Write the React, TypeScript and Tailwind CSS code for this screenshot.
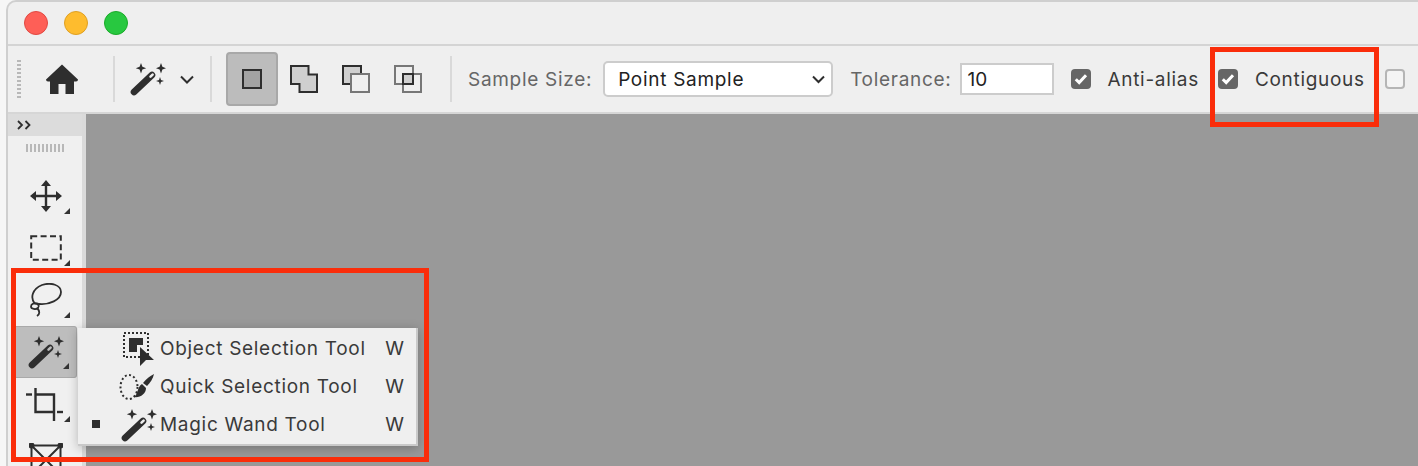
import { ReactNode } from "react";

const ink = "#2e2e2e";

function Sep({ className }: { className: string }) {
  return <div className={`h-[46px] w-[2px] shrink-0 bg-[#d9d9d9] ${className}`} />;
}

function Wand({ tip = "#efefef" }: { tip?: string }) {
  return (
    <svg width="36" height="33" viewBox="0 0 36 33" fill={ink}>
      <path d="M4 29 L22 12" stroke={ink} strokeWidth="6.6" strokeLinecap="round" />
      <path d="M20.5 13.6 L22.6 11.6" stroke={tip} strokeWidth="2.6" strokeLinecap="round" />
      <path d="M11 0 L12.4 3.8 L16.2 5.2 L12.4 6.6 L11 10.4 L9.6 6.6 L5.8 5.2 L9.6 3.8Z" />
      <path d="M31 0 L32.4 3.8 L36 5.2 L32.4 6.6 L31 10.4 L29.6 6.6 L26 5.2 L29.6 3.8Z" />
      <path d="M30 14 L31 17 L34 18 L31 19 L30 22 L29 19 L26 18 L29 17Z" />
    </svg>
  );
}

function ModeIcon({ n }: { n: number }) {
  if (n === 0)
    return (
      <svg width="28" height="28" viewBox="0 0 28 28">
        <path d="M1 1 H18.5 V9.5 H27 V27 H9.5 V19 H1Z" fill="#cfcfcf" stroke={ink} strokeWidth="2" />
      </svg>
    );
  if (n === 1)
    return (
      <svg width="28" height="28" viewBox="0 0 28 28">
        <rect x="1" y="1" width="18" height="18" fill="#cfcfcf" stroke={ink} strokeWidth="2" />
        <rect x="9" y="9" width="18" height="18" fill="#efefef" stroke="#777" strokeWidth="2" />
      </svg>
    );
  return (
    <svg width="28" height="28" viewBox="0 0 28 28" fill="none">
      <rect x="1" y="1" width="18" height="18" stroke="#777" strokeWidth="2" />
      <rect x="9" y="9" width="18" height="18" stroke="#777" strokeWidth="2" />
      <rect x="9" y="9" width="10" height="10" fill="#cfcfcf" stroke={ink} strokeWidth="2" />
    </svg>
  );
}

function Check({ on, className }: { on: boolean; className: string }) {
  if (!on)
    return <div className={`h-5 w-5 shrink-0 rounded-[4px] border-2 border-[#b5b5b5] bg-[#f4f4f4] ${className}`} />;
  return (
    <div className={`flex h-5 w-5 shrink-0 items-center justify-center rounded-[4px] bg-[#666666] ${className}`}>
      <svg width="14" height="12" viewBox="0 0 14 12" fill="none">
        <path d="M1.8 6.2 L5.2 9.6 L12 2.2" stroke="#fff" strokeWidth="3" />
      </svg>
    </div>
  );
}

function Corner() {
  return <div className="absolute right-[7px] bottom-[8px] h-0 w-0 border-b-[6px] border-l-[6px] border-b-[#333333] border-l-transparent" />;
}

function Tool({ children, active }: { children: ReactNode; active?: boolean }) {
  return (
    <div
      className={`relative flex h-[52px] w-[61px] items-center justify-center pr-[1px] ${
        active ? "rounded-r-[3px] border-y border-r border-[#a9a9a9] bg-[#bdbdbd]" : ""
      }`}
    >
      {children}
      <Corner />
    </div>
  );
}

function MenuRow({ icon, label, mark }: { icon: ReactNode; label: string; mark?: boolean }) {
  return (
    <div className="flex h-[38px] items-center">
      <div className="flex w-[40px] shrink-0 justify-center">
        {mark && <div className="mr-[4px] mb-[3px] h-2 w-2 bg-[#2e2e2e]" />}
      </div>
      <div className="flex w-[42px] shrink-0 justify-center">{icon}</div>
      <span className="tracking-[0.7px]">{label}</span>
      <span className="mr-[12px] ml-auto">W</span>
    </div>
  );
}

export default function App() {
  return (
    <div className="relative h-[466px] w-[1418px] overflow-hidden bg-[#f6f6f6] pl-[6px] font-['Inter',sans-serif] text-[19px] text-[#333333]">
      <div className="flex h-full flex-col rounded-tl-[10px] border-t-2 border-l-2 border-[#cfcfcf] bg-[#efefef]">
        {/* title bar */}
        <div className="flex h-[44px] shrink-0 items-center gap-[16px] border-b-2 border-[#d4d4d4] pl-[16px]">
          <div className="h-6 w-6 rounded-full border border-[#e14942] bg-[#fe5f57]" />
          <div className="h-6 w-6 rounded-full border border-[#dfa023] bg-[#febc2e]" />
          <div className="h-6 w-6 rounded-full border border-[#1aab29] bg-[#28c840]" />
        </div>

        {/* options bar */}
        <div className="flex h-[68px] shrink-0 items-center border-b-2 border-[#d6d6d6] text-[#3a3a3a]">
          <div className="ml-[9px] h-[38px] w-[4px] shrink-0 bg-[repeating-linear-gradient(to_bottom,#b8b8b8_0,#b8b8b8_2px,transparent_2px,transparent_4px)]" />
          <svg className="ml-[25px] shrink-0" width="32" height="30" viewBox="0 0 32 30" fill={ink}>
            <path d="M16 0.5 L32 15.5 Q32 17.5 30 17.5 H28 V30 H19.5 V20 H12.5 V30 H4 V17.5 H2 Q0 17.5 0 15.5Z" />
          </svg>
          <Sep className="ml-[35px]" />
          <div className="ml-[15px] shrink-0"><Wand /></div>
          <svg className="ml-[14px] shrink-0" width="14" height="9" viewBox="0 0 14 9" fill="none">
            <path d="M1 1.5 L7 7.5 L13 1.5" stroke={ink} strokeWidth="2" />
          </svg>
          <Sep className="ml-[16px]" />
          <div className="ml-[14px] flex h-[54px] w-[52px] shrink-0 items-center justify-center rounded-[4px] border-2 border-[#a8a8a8] bg-[#bcbcbc]">
            <div className="h-5 w-5 border-2 border-[#2e2e2e] bg-[#a3a3a3]" />
          </div>
          <div className="ml-[12px] flex shrink-0 gap-[24px]">
            <ModeIcon n={0} />
            <ModeIcon n={1} />
            <ModeIcon n={2} />
          </div>
          <Sep className="ml-[28px]" />
          <span className="ml-[16px] shrink-0 pt-[2px] tracking-[0.7px] text-[#666666]">Sample Size:</span>
          <div className="ml-[11px] flex h-[36px] w-[230px] shrink-0 items-center justify-between rounded-[5px] border-2 border-[#cccccc] bg-white pr-[6px] pl-[13px] text-[#222222]">
            <span className="pt-[2px] tracking-[0.7px]">Point Sample</span>
            <svg width="13" height="9" viewBox="0 0 13 9" fill="none">
              <path d="M1 1.5 L6.5 7 L12 1.5" stroke={ink} strokeWidth="2" />
            </svg>
          </div>
          <span className="ml-[17px] shrink-0 pt-[2px] tracking-[0.7px] text-[#666666]">Tolerance:</span>
          <div className="ml-[9px] flex h-[32px] w-[94px] shrink-0 items-center border-2 border-[#cccccc] bg-white pt-[2px] pl-[5px] text-[#222222]">10</div>
          <Check on className="ml-[17px]" />
          <span className="ml-[16px] shrink-0 pt-[2px] tracking-[0.7px]">Anti-alias</span>
          <Check on className="ml-[19px]" />
          <span className="ml-[17px] shrink-0 pt-[2px] tracking-[0.7px]">Contiguous</span>
          <Check on={false} className="ml-[20px]" />
        </div>

        {/* work area */}
        <div className="flex min-h-0 flex-1">
          <div className="w-[74px] shrink-0 bg-[#f0f0f0]">
            <div className="flex h-[22px] items-center bg-[#dcdcdc] pl-[9px]">
              <svg width="14" height="10" viewBox="0 0 14 10" fill="none">
                <path d="M1 1 L5 5 L1 9 M8.5 1 L12.5 5 L8.5 9" stroke={ink} strokeWidth="1.8" />
              </svg>
            </div>
            <div className="mt-[8px] ml-[18px] h-2 w-[38px] bg-[repeating-linear-gradient(to_right,#b8b8b8_0,#b8b8b8_2px,transparent_2px,transparent_4px)]" />
            <div className="mt-[18px] flex flex-col pl-[8px]">
              <Tool>
                <svg width="32" height="32" viewBox="0 0 32 32" fill={ink}>
                  <path d="M16 0 L21 6 H11Z M16 32 L11 26 H21Z M0 16 L6 11 V21Z M32 16 L26 21 V11Z" />
                  <path d="M16 4 V28 M4 16 H28" stroke={ink} strokeWidth="2.4" />
                </svg>
              </Tool>
              <Tool>
                <svg width="32" height="26" viewBox="0 0 32 26" fill="none">
                  <rect x="1.2" y="1.2" width="29.6" height="23.6" stroke={ink} strokeWidth="2" strokeDasharray="6 3.4" />
                </svg>
              </Tool>
              <Tool>
                <svg width="34" height="34" viewBox="0 0 34 34" fill="none" stroke={ink} strokeWidth="1.8">
                  <path d="M6 21 C1 15 3 6 13 2 C22 -1 32 2 32 9 C32 17 20 22 10 21" />
                  <path d="M10 21 C5 19 2 21 2 23.5 C2 26 7 27 9 25 C11 23 9 20 6 21" />
                  <path d="M8 25 C11 28 11 31 8 33" />
                </svg>
              </Tool>
              <Tool active>
                <Wand tip="#bdbdbd" />
              </Tool>
              <Tool>
                <svg className="mr-[3px]" width="37" height="33" viewBox="0 0 37 33" fill="none" stroke={ink} strokeWidth="2.4">
                  <path d="M0 6.5 H6" />
                  <path d="M9.5 0 V24 H28 " />
                  <path d="M9.5 6.5 H28 V33" />
                  <path d="M31 24 H37" />
                </svg>
              </Tool>
              <Tool>
                <svg className="mt-[8px] shrink-0" width="34" height="34" viewBox="0 0 34 34" fill="none" stroke={ink} strokeWidth="2">
                  <rect x="2.5" y="2.5" width="29" height="29" />
                  <path d="M2.5 2.5 L31.5 31.5 M31.5 2.5 L2.5 31.5" />
                  <circle cx="2.5" cy="2.5" r="2" fill={ink} />
                  <circle cx="31.5" cy="2.5" r="2" fill={ink} />
                </svg>
              </Tool>
            </div>
          </div>
          <div className="w-[4px] shrink-0 bg-[#dadada]" />
          <div className="flex-1 bg-[#999999]" />
        </div>
      </div>

      {/* tool flyout */}
      <div className="absolute top-[328px] left-[78px] w-[340px] border-r-2 border-b-2 border-[#c9c9c9] bg-[#efefef] pt-[2px] text-[#3a3a3a] shadow-[0_2px_10px_rgba(0,0,0,0.25)]">
        <MenuRow
          label="Object Selection Tool"
          icon={
            <svg width="32" height="34" viewBox="0 0 32 34" fill="none">
              <rect x="1" y="1" width="24" height="24" stroke={ink} strokeWidth="2" strokeDasharray="2 2" />
              <path d="M6 6 H20 V13 H14 V20 H6Z" fill={ink} />
              <path d="M17 15 L31 28 L23 28 L17 34Z" fill={ink} />
            </svg>
          }
        />
        <MenuRow
          label="Quick Selection Tool"
          icon={
            <svg className="mr-[4px]" width="36" height="28" viewBox="0 0 36 28" fill={ink}>
              <ellipse cx="10" cy="14" rx="8.5" ry="12" fill="none" stroke={ink} strokeWidth="2" strokeDasharray="2 2.4" />
              <path d="M35 1 C34 6 31 10 28 13 L24 10 C27 6 31 3 35 1Z" />
              <path d="M23 11 L27 15 C27 21 21 25 15 24 C19 22 18 14 23 11Z" />
            </svg>
          }
        />
        <MenuRow mark label="Magic Wand Tool" icon={<Wand />} />
      </div>

      {/* red annotations */}
      <div className="absolute top-[268px] left-[11px] h-[194px] w-[418px] border-[5px] border-[#fa2d0a]" />
      <div className="absolute top-[47px] left-[1210px] h-[80px] w-[169px] border-[5px] border-[#fa2d0a]" />
    </div>
  );
}
